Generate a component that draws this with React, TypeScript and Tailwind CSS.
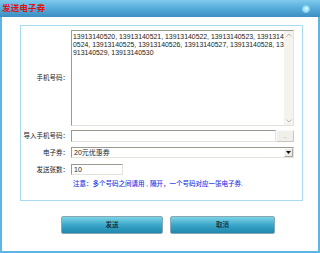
import React from "react";

const font = { fontFamily: '"Liberation Sans", "Noto Sans CJK SC", sans-serif' };

export default function App() {
  return (
    <div className="w-[320px] h-[253px] bg-white overflow-hidden" style={font}>
      <div className="h-[17px] flex items-center justify-between bg-gradient-to-b from-[#7fcaee] via-[#55abd8] to-[#3a8ec2] pl-[2px] pr-[10px]">
        <span className="text-[8.5px] font-bold text-[#e01010] leading-none tracking-[0.2px]">发送电子券</span>
        <span className="w-[8px] h-[8px] rounded-full bg-[#a6e4f7] border border-[#7fd0ee] flex items-center justify-center">
          <span className="w-[3px] h-[3px] rounded-full bg-[#d8f4fc]" />
        </span>
      </div>
      <div className="h-[236px] border-x-2 border-b-2 border-[#5db5e3] pt-[8px] px-[18px]">
        <div className="w-[283px] h-[176px] border border-[#a8daf2] pt-[4px]">
          <div className="flex">
            <div className="w-[50px] flex items-center justify-end pr-[2px] text-[6.5px] text-[#222]">手机号码：</div>
            <div className="w-[223px] h-[96px] border border-t-[#9a9a90] border-l-[#9a9a90] border-r-[#e4e2da] border-b-[#e4e2da] flex">
              <div className="flex-1 pl-[1px] pt-[2px] text-[6.9px] leading-[8px] text-[#222] whitespace-nowrap overflow-hidden">
                <div>13913140520, 13913140521, 13913140522, 13913140523, 1391314</div>
                <div>0524, 13913140525, 13913140526, 13913140527, 13913140528, 13</div>
                <div>913140529, 13913140530</div>
              </div>
              <div className="w-[9px] bg-[#f4f3ee] flex flex-col justify-between items-center py-[2px]">
                <svg width="6" height="4" viewBox="0 0 6 4"><path d="M0.5 3.5 L3 1 L5.5 3.5" fill="none" stroke="#b8b8b0" strokeWidth="1" /></svg>
                <svg width="6" height="4" viewBox="0 0 6 4"><path d="M0.5 0.5 L3 3 L5.5 0.5" fill="none" stroke="#b8b8b0" strokeWidth="1" /></svg>
              </div>
            </div>
          </div>
          <div className="flex mt-[4px]">
            <div className="w-[50px] flex items-center justify-end pr-[2px] text-[6.5px] text-[#222] whitespace-nowrap">导入手机号码：</div>
            <div className="w-[205px] h-[12px] border border-t-[#9a9a90] border-l-[#9a9a90] border-r-[#e4e2da] border-b-[#e4e2da]" />
            <div className="w-[18px] h-[12px] bg-[#f0efea] border border-[#c8c6be] border-t-[#fafafa] border-l-[#fafafa] flex items-center justify-center text-[5px] text-[#888] leading-none">...</div>
          </div>
          <div className="flex mt-[5px]">
            <div className="w-[50px] flex items-center justify-end pr-[2px] text-[6.5px] text-[#222]">电子券：</div>
            <div className="w-[223px] h-[11px] border border-t-[#9a9a90] border-l-[#9a9a90] border-r-[#e4e2da] border-b-[#e4e2da] flex">
              <div className="flex-1 pl-[2px] text-[7px] leading-[9px] text-[#222]">20元优惠券</div>
              <div className="w-[9px] h-[9px] bg-[#eceae2] border border-[#fafafa] border-r-[#a8a69e] border-b-[#a8a69e] flex items-center justify-center">
                <svg width="5" height="3" viewBox="0 0 5 3"><path d="M0 0 L5 0 L2.5 3 Z" fill="#111" /></svg>
              </div>
            </div>
          </div>
          <div className="flex mt-[6px]">
            <div className="w-[50px] flex items-center justify-end pr-[2px] text-[6.5px] text-[#222]">发送张数：</div>
            <div className="w-[52px] h-[11px] border border-t-[#9a9a90] border-l-[#9a9a90] border-r-[#e4e2da] border-b-[#e4e2da] pl-[2px] text-[7px] leading-[9px] text-[#222]">10</div>
          </div>
          <div className="pl-[52px] mt-[5px] text-[6.5px] leading-[8px] font-medium text-[#1a36e6] whitespace-nowrap">注意：多个号码之间请用 , 隔开，一个号码对应一张电子券.</div>
        </div>
        <div className="flex mt-[15px] pl-[41px] gap-[7px]">
          <div className="w-[102px] h-[18px] rounded-[2px] border border-[#8aa8b4] bg-gradient-to-b from-[#7ad3e6] via-[#3aa6c8] to-[#1f88ae] flex items-center justify-center text-[6.5px] font-medium text-[#13242a]">发送</div>
          <div className="w-[105px] h-[18px] rounded-[2px] border border-[#8aa8b4] bg-gradient-to-b from-[#7ad3e6] via-[#3aa6c8] to-[#1f88ae] flex items-center justify-center text-[6.5px] font-medium text-[#13242a]">取消</div>
        </div>
      </div>
    </div>
  );
}
